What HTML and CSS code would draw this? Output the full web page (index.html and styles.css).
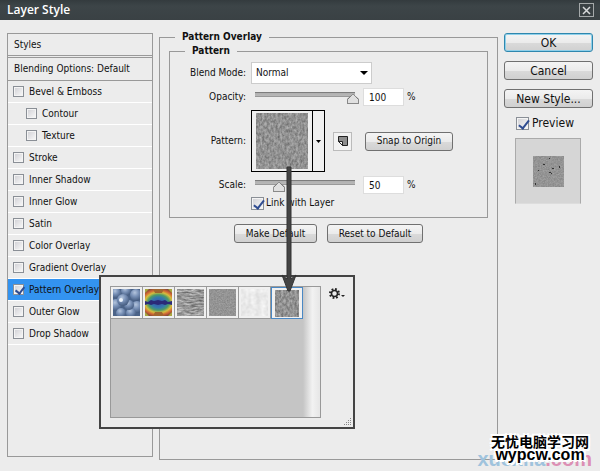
FILE: index.html
```html
<!DOCTYPE html>
<html lang="en">
<head>
    <meta charset="UTF-8">
    <meta name="viewport" content="width=device-width, initial-scale=1.0">
    <title>Layer Style</title>
    <link rel="stylesheet" href="styles.css">
</head>
<body>
    <!-- shared texture filters -->
    <svg class="defs" aria-hidden="true" color-interpolation-filters="sRGB">
        <filter id="grain" x="0" y="0" width="100%" height="100%">
            <feTurbulence type="fractalNoise" baseFrequency="0.45 0.3" numOctaves="3" seed="4"/>
            <feColorMatrix values="0.4 0 0 0 0.37  0.4 0 0 0 0.37  0.4 0 0 0 0.37  0 0 0 0 1"/>
        </filter>
        <filter id="fine" x="0" y="0" width="100%" height="100%">
            <feTurbulence type="fractalNoise" baseFrequency="0.7" numOctaves="2" seed="8"/>
            <feColorMatrix values="0.2 0 0 0 0.48  0.2 0 0 0 0.48  0.2 0 0 0 0.48  0 0 0 0 1"/>
        </filter>
        <filter id="lines" x="0" y="0" width="100%" height="100%">
            <feTurbulence type="fractalNoise" baseFrequency="0.15 0.6" numOctaves="3" seed="2"/>
            <feColorMatrix values="0.6 0 0 0 0.3  0.6 0 0 0 0.3  0.6 0 0 0 0.3  0 0 0 0 1"/>
        </filter>
        <filter id="paper" x="0" y="0" width="100%" height="100%">
            <feTurbulence type="fractalNoise" baseFrequency="0.2" numOctaves="2" seed="6"/>
            <feColorMatrix values="0.15 0 0 0 0.84  0.15 0 0 0 0.84  0.15 0 0 0 0.84  0 0 0 0 1"/>
        </filter>
    </svg>

    <div class="dialog">
        <header class="titlebar">
            <h1>Layer Style</h1>
            <button type="button" class="close" aria-label="Close">
                <svg width="9" height="9" viewBox="0 0 9 9"><path d="M1 1l7 7M8 1l-7 7" stroke="#d8dadb" stroke-width="1.5"/></svg>
            </button>
        </header>

        <form class="content">
            <div class="styles">
                <div class="styles-head">Styles</div>
                <div class="styles-head blending">Blending Options: Default</div>
                <label class="style"><input type="checkbox">Bevel &amp; Emboss</label>
                <label class="style sub"><input type="checkbox">Contour</label>
                <label class="style sub"><input type="checkbox">Texture</label>
                <label class="style"><input type="checkbox">Stroke</label>
                <label class="style"><input type="checkbox">Inner Shadow</label>
                <label class="style"><input type="checkbox">Inner Glow</label>
                <label class="style"><input type="checkbox">Satin</label>
                <label class="style"><input type="checkbox">Color Overlay</label>
                <label class="style"><input type="checkbox">Gradient Overlay</label>
                <label class="style active"><input type="checkbox" checked>Pattern Overlay</label>
                <label class="style"><input type="checkbox">Outer Glow</label>
                <label class="style"><input type="checkbox">Drop Shadow</label>
            </div>

            <fieldset class="panel">
                <legend>Pattern Overlay</legend>
                <fieldset class="group">
                    <legend>Pattern</legend>
                    <div class="row">
                        <label class="name" for="blend">Blend Mode:</label>
                        <div class="select">
                            <select id="blend"><option>Normal</option></select>
                            <svg width="8" height="4" viewBox="0 0 8 4"><path d="M0 0h8L4 4z"/></svg>
                        </div>
                    </div>
                    <div class="row">
                        <label class="name" for="opacity">Opacity:</label>
                        <input type="range" id="opacity" min="0" max="100" value="100">
                        <input type="text" class="number" value="100" aria-label="Opacity value">
                        <span>%</span>
                    </div>
                    <div class="row">
                        <span class="name">Pattern:</span>
                        <button type="button" class="picker" aria-label="Choose pattern">
                            <svg class="texture" width="52" height="56"><rect width="52" height="56" filter="url(#grain)"/></svg>
                            <span class="drop"><svg width="5" height="3" viewBox="0 0 5 3"><path d="M0 0h5L2.500 3z"/></svg></span>
                        </button>
                        <button type="button" class="new" aria-label="New preset">
                            <svg width="10" height="10" viewBox="0 0 10 10"><path d="M.5 .5h9v9H4.500L.5 5.500z" fill="#8d8d8d" stroke="#222"/><path d="M.5 5.500h4v4z" fill="#f2f2f2" stroke="#222"/></svg>
                        </button>
                        <button type="button" class="btn snap">Snap to Origin</button>
                    </div>
                    <div class="row scale">
                        <label class="name" for="scale">Scale:</label>
                        <input type="range" id="scale" min="0" max="100" value="23">
                        <input type="text" class="number" value="50" aria-label="Scale value">
                        <span>%</span>
                    </div>
                    <label class="link"><input type="checkbox" class="big" checked>Link with Layer</label>
                </fieldset>
                <div class="defaults">
                    <button type="button" class="btn make">Make Default</button>
                    <button type="button" class="btn reset">Reset to Default</button>
                </div>
            </fieldset>

            <div class="actions">
                <div class="buttons">
                    <button type="submit" class="btn ok">OK</button>
                    <button type="button" class="btn">Cancel</button>
                    <button type="button" class="btn">New Style...</button>
                </div>
                <label class="preview"><input type="checkbox" class="big" checked>Preview</label>
                <div class="thumb">
                    <svg width="31" height="31">
                        <rect width="31" height="31" filter="url(#fine)"/>
                        <path d="M10 8h2v1h-2zM19 12h2v1h-2zM16 16h2v1h-2zM18 17h1v1h-1zM26 10h1v2h-1zM2 27h1v2H2zM5 14h1v1H5zM16 2h1v1h-1z" fill="#333"/>
                    </svg>
                </div>
            </div>
        </form>

        <!-- pattern picker popup -->
        <div class="popup">
            <div class="patterns">
                <div class="cells">
                    <button type="button" class="cell" aria-label="Bubbles">
                        <svg width="27" height="27" viewBox="0 0 27 27">
                            <defs>
                                <radialGradient id="ball" cx=".4" cy=".3" r=".7"><stop offset="0" stop-color="#b3c4dc"/><stop offset=".45" stop-color="#7a92b8"/><stop offset="1" stop-color="#455c80"/></radialGradient>
                            </defs>
                            <rect width="27" height="27" fill="#4b6388"/>
                            <g fill="url(#ball)">
                                <circle cx="3" cy="4" r="5"/><circle cx="13" cy="2" r="5"/><circle cx="23" cy="6" r="6"/>
                                <circle cx="3" cy="16" r="6"/><circle cx="24" cy="18" r="6"/><circle cx="8" cy="24" r="5"/>
                                <circle cx="18" cy="24" r="5"/><circle cx="16" cy="16" r="5"/><circle cx="10" cy="11" r="6"/>
                            </g>
                            <circle cx="8" cy="11" r="2" fill="#edf4fc"/>
                        </svg>
                    </button>
                    <button type="button" class="cell" aria-label="Tie dye">
                        <svg width="27" height="27" viewBox="0 0 27 27">
                            <defs>
                                <radialGradient id="dye" gradientUnits="userSpaceOnUse" cx="13.500" cy="13.500" r="20" gradientTransform="matrix(1 0 0 .75 0 3.400)">
                                    <stop offset="0" stop-color="#3a55a8"/><stop offset=".35" stop-color="#3578ae"/><stop offset=".52" stop-color="#4c9a68"/>
                                    <stop offset=".68" stop-color="#d6bd3d"/><stop offset=".83" stop-color="#cf6535"/><stop offset="1" stop-color="#7a4636"/>
                                </radialGradient>
                            </defs>
                            <rect width="27" height="27" fill="url(#dye)"/>
                            <path d="M0 0h4l-4 4zM27 0h-4l4 4zM0 27h4l-4-4zM27 27h-4l4-4z" fill="#a7a741"/>
                            <path d="M8 0h11l-2 4h-7zM8 27h11l-2-4h-7z" fill="#a0662f"/>
                            <path d="M0 12l3 1 3-2 3 1 4-1 4 1 3-1 3 2 4-1v4l-4-1-3 1-3-1-4 1-4-1-3 1-3-1-3 1z" fill="#2b2a78"/>
                        </svg>
                    </button>
                    <button type="button" class="cell" aria-label="Woven lines">
                        <svg width="27" height="27"><rect width="27" height="27" filter="url(#lines)"/></svg>
                    </button>
                    <button type="button" class="cell" aria-label="Fine grain">
                        <svg width="27" height="27"><rect width="27" height="27" filter="url(#fine)"/></svg>
                    </button>
                    <button type="button" class="cell" aria-label="Paper">
                        <svg width="27" height="27"><rect width="27" height="27" filter="url(#paper)"/></svg>
                    </button>
                    <button type="button" class="cell selected" aria-label="Concrete">
                        <svg width="24" height="27"><rect width="24" height="27" filter="url(#grain)"/></svg>
                    </button>
                </div>
                <div class="scrollbar"></div>
            </div>
            <button type="button" class="gear" aria-label="Pattern menu">
                <svg width="16" height="11" viewBox="0 0 16 11">
                    <circle cx="5.500" cy="5.500" r="4.500" fill="none" stroke="#222" stroke-width="2" stroke-dasharray="1.770 1.770"/>
                    <circle cx="5.500" cy="5.500" r="3" fill="none" stroke="#222" stroke-width="1.500"/>
                    <path d="M12 7h4l-2 2z" fill="#222"/>
                </svg>
            </button>
            <svg class="grip" width="9" height="9" viewBox="0 0 9 9"><path d="M7 1h1v1H7zM5 3h1v1H5zM7 3h1v1H7zM3 5h1v1H3zM5 5h1v1H5zM7 5h1v1H7zM1 7h1v1H1zM3 7h1v1H3zM5 7h1v1H5zM7 7h1v1H7z" fill="#888"/></svg>
        </div>

        <svg class="arrow" width="16" height="126" viewBox="0 0 16 126">
            <path d="M6 1h4v112l5-4-6 16H7L1 109l5 4z" fill="#444" stroke="#333"/>
        </svg>

        <div class="watermark">
            <div class="mark-back"><span>xuexila</span><b>.com</b></div>
            <div class="mark-front">
                <div class="mark-cn" lang="zh">无忧电脑学习网</div>
                <div class="mark-url">wypcw.com</div>
            </div>
        </div>
    </div>
</body>
</html>
```
FILE: styles.css
```css
* {
    margin: 0;
    padding: 0;
    box-sizing: border-box;
}

body {
    background-color: #ececec;
    color: #111;
    font-family: "DejaVu Sans Condensed", "DejaVu Sans", sans-serif;
    font-size: 10px;
    line-height: 14px;
}

button, input, select {
    font: inherit;
    color: inherit;
}

svg {
    display: block;
    flex: none;
}

.defs {
    position: absolute;
    width: 0;
    height: 0;
}

.dialog {
    position: relative;
    display: flex;
    flex-direction: column;
    min-height: 100vh;
    overflow: hidden;
}

/* title bar */
.titlebar {
    display: flex;
    align-items: center;
    justify-content: space-between;
    height: 20px;
    padding: 0 6px 0 7px;
    background: linear-gradient(#343b3e, #3d4548 30%, #3a4144);
    color: #fff;
}

.titlebar h1 {
    font-family: "Open Sans", sans-serif;
    font-size: 12px;
    font-weight: 600;
}

.close {
    display: flex;
    align-items: center;
    justify-content: center;
    width: 15px;
    height: 14px;
    background: #3a4144;
    border: 1px solid #a5a9aa;
}

.content {
    flex: 1;
    display: flex;
    gap: 6px;
    padding: 10px 7px 11px;
}

/* checkboxes */
input[type="checkbox"] {
    appearance: none;
    position: relative;
    flex: none;
    width: 11px;
    height: 11px;
    background: linear-gradient(135deg, #cfcfd4, #fafafa);
    border: 1px solid #8a8f96;
    box-shadow: inset 0 0 0 1px #f4f4f4;
}

input[type="checkbox"].big {
    width: 13px;
    height: 13px;
}

input[type="checkbox"]:checked::after {
    content: "";
    position: absolute;
    left: 3px;
    top: 0;
    width: 4px;
    height: 7px;
    border: solid #2f4c91;
    border-width: 0 2px 2px 0;
    transform: rotate(38deg);
}

input[type="checkbox"].big:checked::after {
    left: 4px;
    height: 9px;
}

/* styles list */
.styles {
    flex: none;
    width: 146px;
    margin: 3px 0;
    border: 1px solid #999;
}

.styles-head {
    height: 22px;
    padding-left: 6px;
    line-height: 22px;
    border-bottom: 1px solid #999;
}

.blending {
    height: 24px;
    margin-top: 1px;
    border-top: 1px solid #999;
}

.style {
    display: flex;
    align-items: center;
    gap: 5px;
    height: 22px;
    padding-left: 5px;
    border-bottom: 1px solid #fff;
}

.sub {
    padding-left: 18px;
}

.active {
    background-color: #3393f0;
}

/* options panel */
fieldset {
    min-width: 0;
    border: 1px solid #999;
}

legend {
    height: 14px;
    padding: 0 7px;
    font-weight: 700;
}

.panel {
    flex: 1;
    padding: 0 9px;
}

.panel > legend {
    margin-left: 6px;
}

.group {
    padding: 4px 0 7px;
}

.group > legend {
    margin-left: 15px;
}

.row {
    display: flex;
    align-items: center;
    margin-bottom: 4px;
}

.name {
    width: 76px;
    margin-right: 5px;
    text-align: right;
}

.select {
    position: relative;
    width: 121px;
}

.select select {
    appearance: none;
    display: block;
    width: 100%;
    height: 22px;
    padding-left: 4px;
    background-color: #fff;
    border: 1px solid #ccc;
    border-radius: 0;
}

.select svg {
    position: absolute;
    right: 4px;
    top: 9px;
}

input[type="range"] {
    appearance: none;
    width: 108px;
    height: 16px;
    margin-right: 4px;
    background: linear-gradient(#7d7d7d 1px, #b0b0b0 1px, #b8b8b8 4px, #999 4px) no-repeat 4px 3px / 100px 5px;
}

input[type="range"]::-webkit-slider-runnable-track {
    height: 16px;
}

input[type="range"]::-webkit-slider-thumb {
    appearance: none;
    width: 12px;
    height: 10px;
    margin-top: 5px;
    border: 1px solid #888;
    border-top: 0;
    background: conic-gradient(from 130deg at 5px 1px, #e0e0e0 100deg, #777 0);
    clip-path: polygon(50% 0, 100% 50%, 100% 100%, 0 100%, 0 50%);
}

.number {
    width: 41px;
    height: 18px;
    margin-right: 3px;
    padding-left: 5px;
    background-color: #fff;
    border: 1px solid #ddd;
}

.picker {
    display: flex;
    width: 74px;
    height: 62px;
    margin-right: 8px;
    background-color: #f0f0f0;
    border: 1px solid #000;
}

.texture {
    margin: 2px 4px;
}

.drop {
    flex: 1;
    display: flex;
    align-self: stretch;
    align-items: center;
    justify-content: center;
    border-left: 1px solid #000;
}

.new {
    display: flex;
    align-items: center;
    justify-content: center;
    width: 19px;
    height: 19px;
    margin-right: 13px;
    background-color: #f2f2f2;
    border: 1px solid #bbb;
}

.btn {
    height: 19px;
    background: linear-gradient(#f4f4f4, #ebebeb 50%, #dadada 51%, #d0d0d0);
    border: 1px solid #707070;
    border-radius: 3px;
}

.snap {
    width: 88px;
}

.scale {
    margin-bottom: 2px;
}

.link {
    display: flex;
    align-items: center;
    gap: 2px;
    margin-left: 81px;
}

.defaults {
    display: flex;
    gap: 10px;
    margin: 6px 0 0 65px;
}

.make {
    width: 83px;
}

.reset {
    width: 96px;
}

/* right column */
.actions {
    flex: none;
    display: flex;
    flex-direction: column;
    gap: 8px;
    width: 89px;
    padding-top: 3px;
    font-size: 12px;
}

.buttons {
    display: flex;
    flex-direction: column;
    gap: 9px;
}

.ok {
    border-color: #2f87ae;
    box-shadow: inset 0 0 0 1px #8fd0ea;
}

.preview {
    display: flex;
    align-items: center;
    gap: 3px;
    margin-left: 12px;
}

.thumb {
    display: flex;
    align-items: center;
    justify-content: center;
    width: 66px;
    height: 66px;
    margin-left: 11px;
    background-color: #d6d6d6;
    border: 1px solid #aaa;
    border-bottom-color: #ddd;
}

/* pattern popup */
.popup {
    position: absolute;
    left: 99px;
    top: 275px;
    display: flex;
    align-items: flex-start;
    width: 256px;
    height: 154px;
    padding: 9px;
    background-color: #ececec;
    border: 2px solid #444;
}

.patterns {
    display: flex;
    width: 211px;
    height: 132px;
    background-color: #c5c5c5;
    border: 1px solid #999;
}

.cells {
    flex: 1;
    display: flex;
    align-items: flex-start;
}

.cell {
    display: flex;
    align-items: center;
    justify-content: center;
    width: 32px;
    height: 32px;
    background-color: #f0f0f0;
    border: solid #999;
    border-width: 0 1px 1px 0;
}

.selected {
    border: 1px solid #4a88c4;
}

.scrollbar {
    width: 17px;
    background: linear-gradient(90deg, #c5c5c5, #f2f2f2 55%, #e6e6e6);
}

.gear {
    margin: 2px 0 0 8px;
    background: none;
    border: none;
}

.grip {
    position: absolute;
    right: 1px;
    bottom: 1px;
}

.arrow {
    position: absolute;
    left: 281px;
    top: 166px;
}

/* watermark */
.watermark {
    position: absolute;
    right: 8px;
    bottom: 0;
    width: 114px;
    height: 38px;
}

.mark-back {
    position: absolute;
    right: 0;
    bottom: 0;
    font-family: "Liberation Sans", sans-serif;
    font-size: 20px;
    font-weight: 700;
    line-height: 24px;
    color: #9fc3dd;
}

.mark-back b {
    color: #dc8fb4;
}

.mark-front {
    position: absolute;
    right: 3px;
    top: 1px;
    color: #000;
    font-weight: 700;
    text-align: center;
    text-shadow: 1px 0 #fff, -1px 0 #fff, 0 1px #fff, 0 -1px #fff, 2px 2px #fff, -2px -2px #fff, 2px -2px #fff, -2px 2px #fff;
}

.mark-cn {
    font-family: "Noto Sans CJK SC", sans-serif;
    font-size: 14px;
    line-height: 14px;
}

.mark-url {
    font-family: "Liberation Sans", sans-serif;
    font-size: 16px;
    line-height: 14px;
}
```
